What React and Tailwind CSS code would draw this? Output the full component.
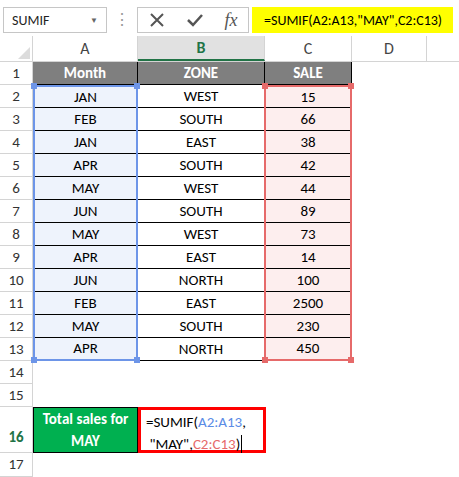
const data=[["JAN","WEST","15"],["FEB","SOUTH","66"],["JAN","EAST","38"],["APR","SOUTH","42"],["MAY","WEST","44"],["JUN","SOUTH","89"],["MAY","WEST","73"],["APR","EAST","14"],["JUN","NORTH","100"],["FEB","EAST","2500"],["MAY","SOUTH","230"],["APR","NORTH","450"]];
const F={fontFamily:'Calibri,"Open Sans","Liberation Sans",sans-serif'};
function RH({n,h="h-[23px]",bold}){return <div className={`w-[33px] ${h} shrink-0 border-r border-b border-[#d4d4d4] bg-white flex items-center justify-center text-[15px] text-[#333] ${bold?"bg-[#e1e1e1] font-bold text-[#217346] items-end pb-1":""}`}>{n}</div>}
export default function App(){
return <div className="w-[459px] h-[477px] bg-white overflow-hidden relative" style={F}>
 <div className="h-[36px] flex items-center gap-0 pt-1">
  <div className="ml-[3px] w-[104px] h-[26px] border border-[#c6c6c6] flex items-center px-2 text-[14px] text-[#222] justify-between">SUMIF<span className="text-[8px] text-[#666]">▼</span></div>
  <div className="w-[30px] text-center text-[#999] text-[16px]">⋮</div>
  <div className="w-[112px] h-[26px] border border-[#c6c6c6] flex items-center justify-around text-[#555]">
   <svg width="16" height="16" viewBox="0 0 16 16"><path d="M2 2L14 14M14 2L2 14" stroke="#555" strokeWidth="2"/></svg>
   <svg width="18" height="16" viewBox="0 0 18 16"><path d="M2 8L7 13L16 3" stroke="#555" strokeWidth="2.5" fill="none"/></svg>
   <span className="italic text-[18px]" style={{fontFamily:'"Liberation Serif",serif'}}>fx</span>
  </div>
  <div className="ml-[3px] w-[201px] h-[26px] bg-[#ffff00] flex items-center pl-[12px] text-[14px] text-black">=SUMIF(A2:A13,"MAY",C2:C13)</div>
 </div>
 <div className="h-[26px] flex border-b border-[#d4d4d4] bg-white text-[16px] text-[#444]">
  <div className="w-[33px] border-r border-[#d4d4d4] relative"><svg className="absolute right-0.5 bottom-0.5" width="12" height="12"><path d="M12 0L12 12L0 12Z" fill="#dcdcdc"/></svg></div>
  <div className="w-[105px] border-r border-[#d4d4d4] flex items-center justify-center">A</div>
  <div className="w-[127px] border-r border-[#d4d4d4] flex items-center justify-center bg-[#e1e1e1] border-b-2 border-b-[#217346] font-bold text-[#217346]">B</div>
  <div className="w-[87px] border-r border-[#d4d4d4] flex items-center justify-center">C</div>
  <div className="w-[75px] border-r border-[#d4d4d4] flex items-center justify-center">D</div>
  <div className="flex-1"></div>
 </div>
 <div className="flex">
  <RH n={1}/>
  <div className="w-[105px] h-[23px] bg-[#7f7f7f] border-r border-b border-black text-white font-bold text-[15px] flex items-center justify-center">Month</div>
  <div className="w-[127px] h-[23px] bg-[#7f7f7f] border-r border-b border-black text-white font-bold text-[15px] flex items-center justify-center">ZONE</div>
  <div className="w-[87px] h-[23px] bg-[#7f7f7f] border-r border-b border-black text-white font-bold text-[15px] flex items-center justify-center">SALE</div>
 </div>
 <div className="flex">
  <div>{data.map((_,i)=><RH key={i} n={i+2}/>)}</div>
  <div className="w-[105px] border-2 border-[#6d95e8] bg-[#eef3fc] relative">
   {data.map((r,i)=><div key={i} className={`h-[23px] flex items-center justify-center text-[15px] ${i<11?"border-b border-black":""}`} style={{height:i===0||i===11?21:23}}>{r[0]}</div>)}
   <div className="absolute -left-[4px] -top-[4px] w-[6px] h-[6px] bg-[#6d95e8]"/><div className="absolute -right-[4px] -top-[4px] w-[6px] h-[6px] bg-[#6d95e8]"/><div className="absolute -left-[4px] -bottom-[4px] w-[6px] h-[6px] bg-[#6d95e8]"/><div className="absolute -right-[4px] -bottom-[4px] w-[6px] h-[6px] bg-[#6d95e8]"/>
  </div>
  <div className="w-[126px]">
   {data.map((r,i)=><div key={i} className="h-[23px] border-b border-black flex items-center justify-center text-[15px]">{r[1]}</div>)}
  </div>
  <div className="w-[88px] border-2 border-[#e66a6a] bg-[#fdeeee] relative">
   {data.map((r,i)=><div key={i} className={`flex items-center justify-center text-[15px] ${i<11?"border-b border-black":""}`} style={{height:i===0||i===11?21:23}}>{r[2]}</div>)}
   <div className="absolute -left-[4px] -top-[4px] w-[6px] h-[6px] bg-[#e66a6a]"/><div className="absolute -right-[4px] -top-[4px] w-[6px] h-[6px] bg-[#e66a6a]"/><div className="absolute -left-[4px] -bottom-[4px] w-[6px] h-[6px] bg-[#e66a6a]"/><div className="absolute -right-[4px] -bottom-[4px] w-[6px] h-[6px] bg-[#e66a6a]"/>
  </div>
 </div>
 <div className="flex"><RH n={14}/></div>
 <div className="flex"><RH n={15}/></div>
 <div className="flex">
  <RH n={16} h="h-[46px]" bold/>
  <div className="w-[105px] h-[46px] bg-[#00b050] border border-black text-white font-bold text-[15px] leading-[22px] flex items-center justify-center text-center">Total sales for<br/>MAY</div>
  <div className="w-[128px] h-[46px] border-[3px] border-[#ff0000] text-[15px] leading-[22px] pl-[5px] pt-[1px] text-black">=SUMIF(<span className="text-[#5b8ce6]">A2:A13</span>,<br/>&nbsp;"MAY",<span className="text-[#e66a6a]">C2:C13</span>)<span className="border-l border-black ml-px"></span></div>
 </div>
 <div className="flex"><RH n={17} h="h-[24px]"/></div>
</div>}
